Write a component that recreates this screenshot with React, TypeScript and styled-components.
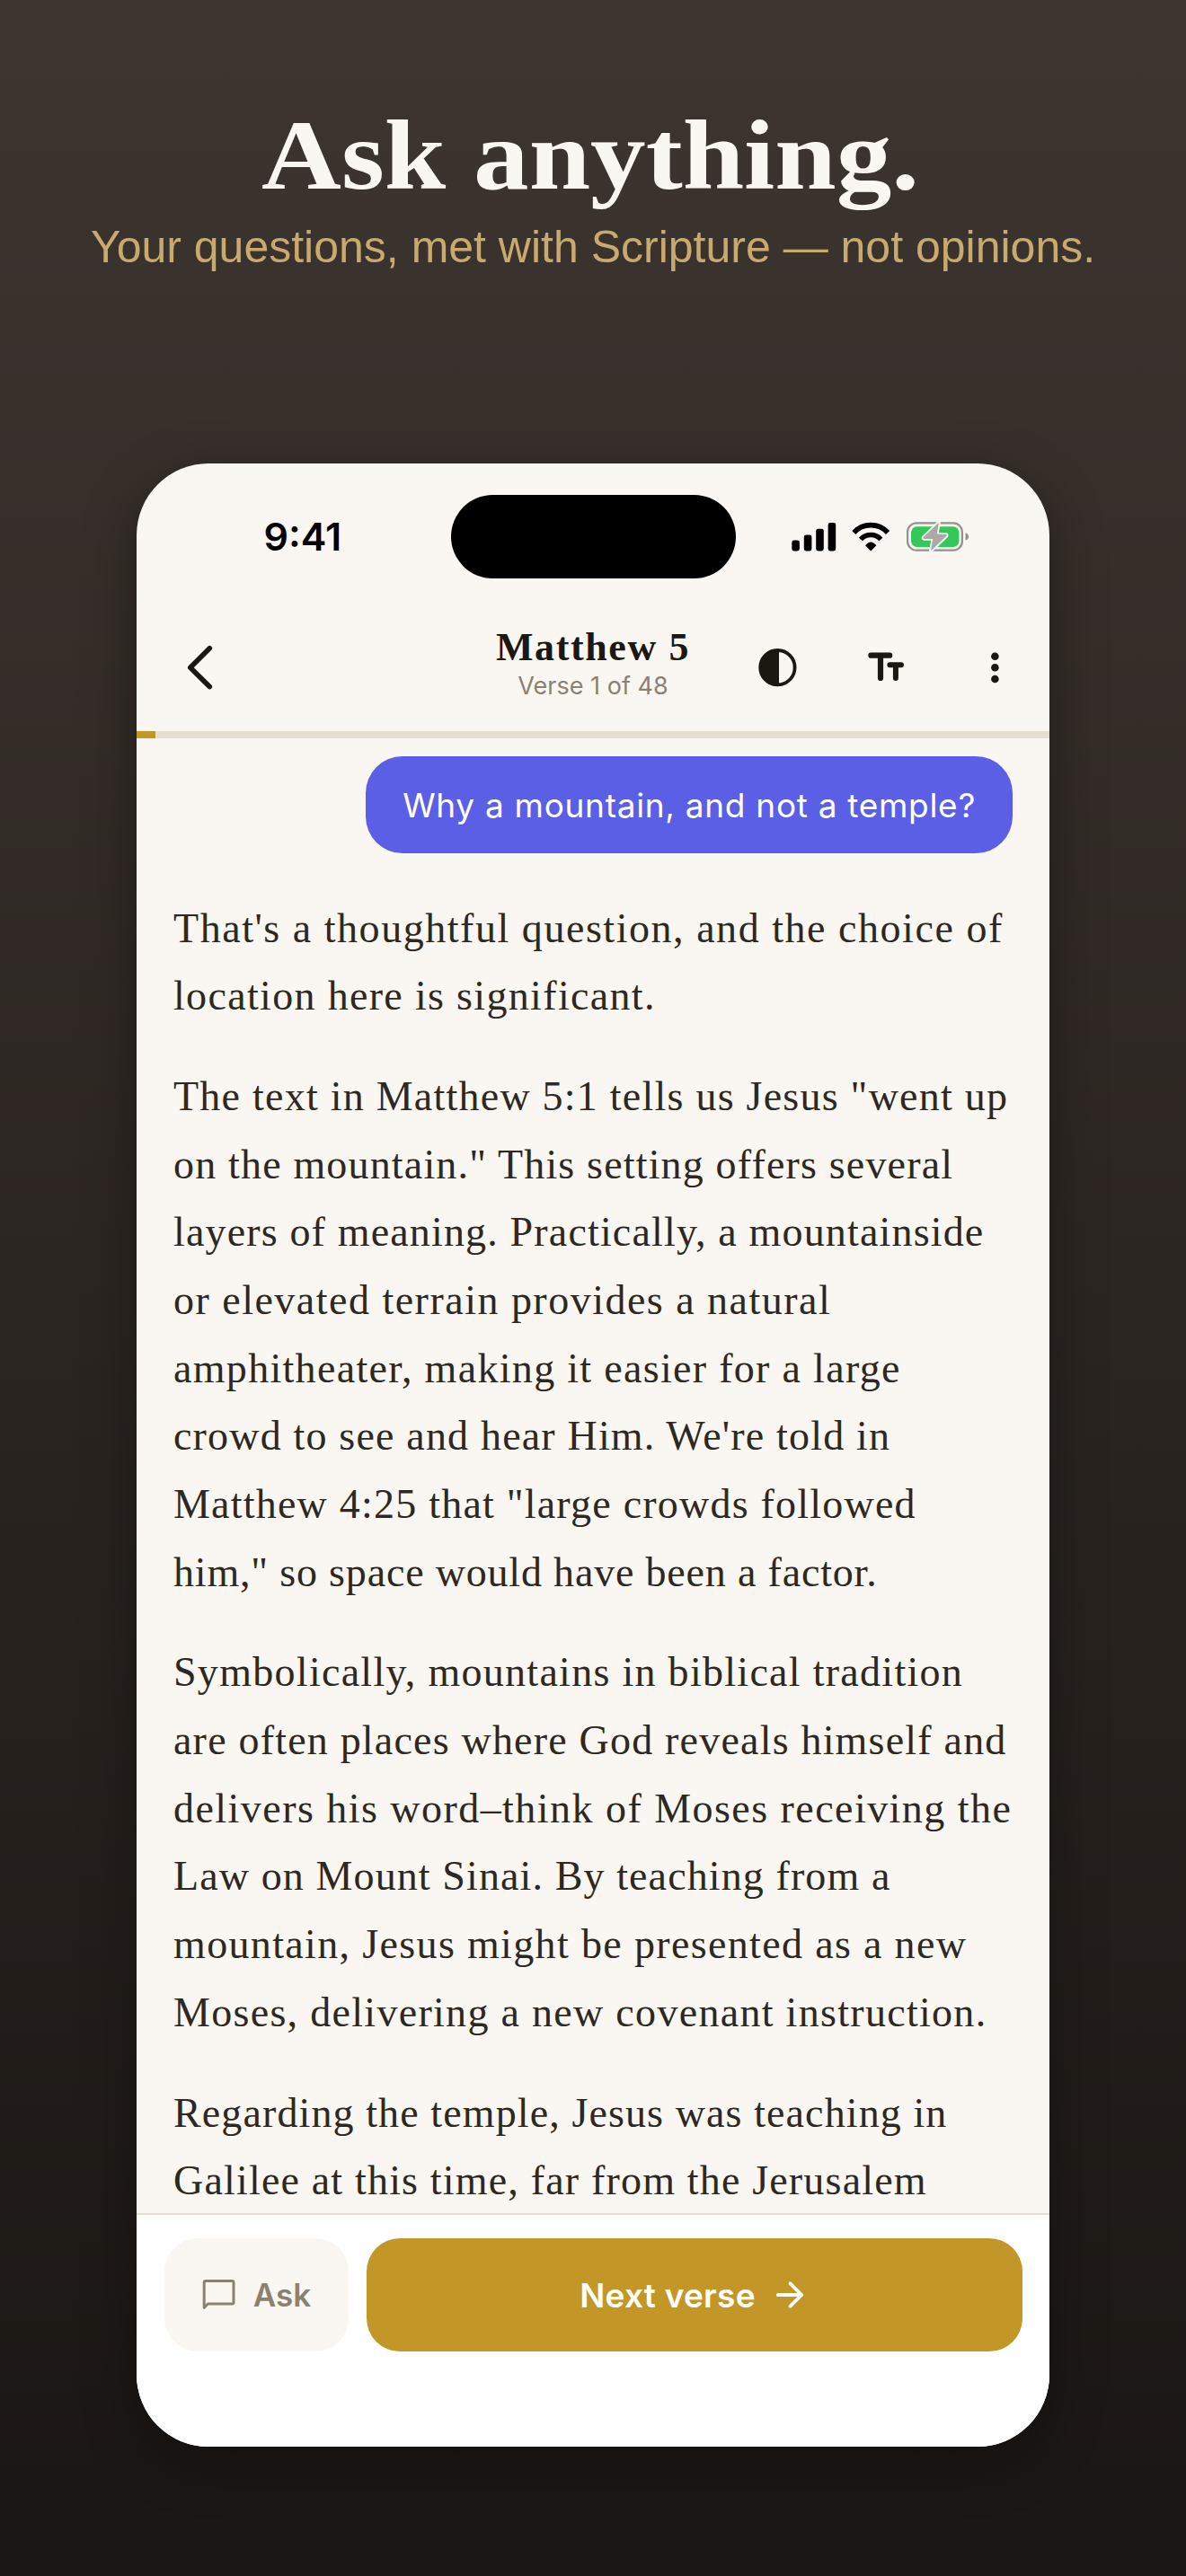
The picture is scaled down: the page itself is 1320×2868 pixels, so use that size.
import React from "react";
import styled, { ThemeProvider, createGlobalStyle } from "styled-components";

const theme = {
  colors: {
    cream: "#faf7f2",
    sand: "#e6dfd1",
    gold: "#c39628",
    tan: "#c9a96e",
    indigo: "#5b5fe6",
    ink: "#1b1711",
    body: "#2d2822",
    muted: "#8b8173",
    white: "#ffffff",
  },
  fontFamily: {
    serif: `"Liberation Serif", "Times New Roman", serif`,
    sans: `Inter, "Liberation Sans", sans-serif`,
    arial: `"Liberation Sans", Arial, sans-serif`,
  },
};

const GlobalStyle = createGlobalStyle`
  body {
    margin: 0;
  }

  *, *::before, *::after {
    box-sizing: border-box;
  }
`;

const Page = styled.main`
  width: 1320px;
  height: 2868px;
  padding-top: 113px;
  display: flex;
  flex-direction: column;
  align-items: center;
  overflow: hidden;
  background: linear-gradient(180deg, #3d3530 0%, #1a1613 100%);
`;

const Headline = styled.h1`
  margin: 0;
  font-family: ${(props) => props.theme.fontFamily.serif};
  font-weight: 700;
  font-size: 110px;
  line-height: 120px;
  color: ${(props) => props.theme.colors.cream};
  white-space: nowrap;
  transform: translateX(-3px) scaleX(1.119);
`;

const Tagline = styled.p`
  margin: 12px 0 0;
  font-family: ${(props) => props.theme.fontFamily.arial};
  font-size: 50px;
  line-height: 60px;
  color: ${(props) => props.theme.colors.tan};
  white-space: nowrap;
`;

const Phone = styled.section`
  width: 1016px;
  height: 2208px;
  margin-top: 211px;
  flex-shrink: 0;
  display: flex;
  flex-direction: column;
  overflow: hidden;
  border-radius: 80px;
  background-color: ${(props) => props.theme.colors.cream};
  box-shadow: 0 16px 60px rgba(0, 0, 0, 0.35);
`;

const StatusBar = styled.div`
  height: 156px;
  padding-top: 35px;
  flex-shrink: 0;
  display: grid;
  grid-template-columns: 1fr 317px 1fr;
  grid-template-rows: 93px;
  align-items: center;
`;

const Clock = styled.div`
  padding-left: 141.5px;
  font-family: ${(props) => props.theme.fontFamily.sans};
  font-weight: 600;
  font-size: 43px;
  line-height: 93px;
  color: #000;
`;

const Island = styled.div`
  height: 93px;
  border-radius: 47px;
  background-color: #000;
`;

const StatusIcons = styled.div`
  padding-left: 62px;
  display: flex;
  align-items: center;
  gap: 18px;

  svg {
    display: block;
    overflow: visible;
  }
`;

const Header = styled.header`
  height: 142px;
  padding: 0 37px;
  flex-shrink: 0;
  display: grid;
  grid-template-columns: 1fr auto 1fr;
  align-items: center;
`;

const IconButton = styled.button`
  width: 48px;
  height: 48px;
  padding: 0;
  border: 0;
  background: none;
  color: ${(props) => props.theme.colors.ink};

  svg {
    display: block;
  }
`;

const BackButton = styled(IconButton)`
  margin-left: 9px;
`;

const Actions = styled.div`
  display: flex;
  justify-content: flex-end;
  gap: 73px;
`;

const TitleBlock = styled.div`
  padding-bottom: 9px;
  text-align: center;
  white-space: nowrap;
`;

const Title = styled.h2`
  margin: 0 0 2px;
  font-family: ${(props) => props.theme.fontFamily.serif};
  font-weight: 700;
  font-size: 44px;
  line-height: 48px;
  letter-spacing: 1.6px;
  color: ${(props) => props.theme.colors.ink};
`;

const Subtitle = styled.div`
  font-family: ${(props) => props.theme.fontFamily.sans};
  font-size: 27px;
  line-height: 34px;
  color: ${(props) => props.theme.colors.muted};
`;

const ProgressTrack = styled.div`
  height: 8px;
  flex-shrink: 0;
  background-color: ${(props) => props.theme.colors.sand};
`;

const ProgressFill = styled.div`
  height: 100%;
  background-color: ${(props) => props.theme.colors.gold};
`;

const Conversation = styled.div`
  flex: 1;
  min-height: 0;
  padding: 20px 41px 0;
  display: flex;
  flex-direction: column;
  overflow: hidden;
`;

const Question = styled.div`
  height: 108px;
  padding: 0 41px;
  align-self: flex-end;
  flex-shrink: 0;
  border-radius: 41px;
  background-color: ${(props) => props.theme.colors.indigo};
  font-family: ${(props) => props.theme.fontFamily.sans};
  font-size: 37px;
  line-height: 109px;
  letter-spacing: 0.7px;
  color: ${(props) => props.theme.colors.white};
  white-space: nowrap;
`;

const Answer = styled.div`
  margin-top: 45.5px;
  display: flex;
  flex-direction: column;
  gap: 36px;
  font-family: ${(props) => props.theme.fontFamily.serif};
  font-size: 46px;
  line-height: 75.68px;
  color: ${(props) => props.theme.colors.body};
`;

const Paragraph = styled.p`
  margin: 0;
`;

const Line = styled.span<{ $spacing: number }>`
  display: block;
  letter-spacing: ${(props) => props.$spacing}px;
  white-space: nowrap;
  font-variant-ligatures: none;
`;

const Footer = styled.footer`
  height: 260px;
  padding: 26px 30px 0 31px;
  flex-shrink: 0;
  display: flex;
  align-items: flex-start;
  gap: 20px;
  border-top: 2px solid ${(props) => props.theme.colors.sand};
  background-color: ${(props) => props.theme.colors.white};
`;

const FooterButton = styled.button`
  height: 126px;
  padding: 0;
  border: 0;
  border-radius: 37px;
  display: flex;
  align-items: center;
  justify-content: center;
  gap: 20px;
  font-family: ${(props) => props.theme.fontFamily.sans};
  font-weight: 600;
`;

const AskButton = styled(FooterButton)`
  width: 205px;
  background-color: ${(props) => props.theme.colors.cream};
  color: ${(props) => props.theme.colors.muted};
  font-size: 35px;
`;

const NextButton = styled(FooterButton)`
  flex: 1;
  padding-right: 4px;
  background-color: ${(props) => props.theme.colors.gold};
  color: ${(props) => props.theme.colors.white};
  font-size: 37px;
  letter-spacing: 0.25px;
`;

const SignalIcon = () => (
  <svg width="49.5" height="33" viewBox="0 0 49.5 33" fill="#000">
    <rect x="0.3" y="20.5" width="8.6" height="12" rx="2.4" />
    <rect x="13.8" y="14.5" width="8.6" height="18" rx="2.4" />
    <rect x="27.2" y="7.7" width="8.6" height="24.8" rx="2.4" />
    <rect x="40.6" y="1" width="8.6" height="31.5" rx="2.4" />
  </svg>
);

const WifiIcon = () => (
  <svg width="43.4" height="33" viewBox="0 0 43.4 33" fill="none" stroke="#000">
    <path d="M2.3 12A25.6 25.6 0 0 1 40.1 12" strokeWidth="5.6" />
    <path d="M10 19.5A15 15 0 0 1 32.4 19.5" strokeWidth="5.6" />
    <path d="M21.2 32.5L15 26.2Q21.2 18.6 27.4 26.2Z" fill="#000" stroke="none" />
  </svg>
);

const BatteryIcon = () => (
  <svg width="70" height="33" viewBox="0 0 70 33" fill="none">
    <rect x="1.1" y="1.3" width="60.8" height="30.4" rx="10" stroke="#94928e" strokeWidth="2.2" />
    <path d="M65.5 12.2Q69.2 13.6 69.2 16.4T65.5 20.6Z" fill="#94928e" />
    <rect x="5" y="5.2" width="53.4" height="22.7" rx="6.6" fill="#34c759" />
    <path
      d="M36 .6L18.6 17.2Q18 18.8 19.6 18.9L29.3 19L26.9 32.6L44.6 15.6Q45.2 14 43.6 13.8L33.8 13.6Z"
      fill="#aaa9a6"
      stroke="#faf7f2"
      strokeWidth="3.6"
      strokeLinejoin="round"
      paintOrder="stroke"
    />
  </svg>
);

const BackIcon = () => (
  <svg width="48" height="48" viewBox="0 0 48 48" fill="none" stroke="currentColor" overflow="visible">
    <path d="M35.3 2.7L13.8 24.3L35.3 45.6" strokeWidth="5.6" strokeLinecap="round" strokeLinejoin="round" />
  </svg>
);

const ContrastIcon = () => (
  <svg width="48" height="48" viewBox="0 0 48 48">
    <circle cx="24.4" cy="24.2" r="19.2" fill="none" stroke="currentColor" strokeWidth="3.8" />
    <path d="M26 4V44.4H24.4A20.2 20.2 0 0 1 24.4 4Z" fill="currentColor" />
  </svg>
);

const TextSizeIcon = () => (
  <svg width="48" height="48" viewBox="0 0 48 48" fill="none" stroke="currentColor" strokeWidth="6.2" strokeLinecap="round">
    <path d="M7.4 10.7H28.2M18 10.7V36" />
    <path d="M28.4 21.3H41M34.9 21.3V36" strokeWidth="6" />
  </svg>
);

const MoreIcon = () => (
  <svg width="48" height="48" viewBox="0 0 48 48" fill="currentColor">
    <circle cx="24.4" cy="11.7" r="4.3" />
    <circle cx="24.4" cy="24.3" r="4.3" />
    <circle cx="24.4" cy="37" r="4.3" />
  </svg>
);

const ChatIcon = () => (
  <svg width="37" height="36" viewBox="0 0 37 36" fill="none" stroke="currentColor" strokeWidth="3" strokeLinejoin="round">
    <path d="M4 2.5H33.2Q35 2.5 35 4.3V26.2Q35 28 33.2 28H6.4L2.2 32.3V4.3Q2.2 2.5 4 2.5Z" />
  </svg>
);

const ArrowIcon = () => (
  <svg width="36" height="36" viewBox="0 0 36 36" fill="none" stroke="currentColor" strokeWidth="3.8" strokeLinecap="round" strokeLinejoin="round">
    <path d="M4.8 18H31.2M18.6 5.3L31.2 18L18.6 30.7" />
  </svg>
);

// [text, letter spacing in px]
const ANSWER: [string, number][][] = [
  [
    ["That's a thoughtful question, and the choice of", 1.54],
    ["location here is significant.", 1.33],
  ],
  [
    ['The text in Matthew 5:1 tells us Jesus "went up', 1.24],
    ['on the mountain." This setting offers several', 1.17],
    ["layers of meaning. Practically, a mountainside", 1.16],
    ["or elevated terrain provides a natural", 1.49],
    ["amphitheater, making it easier for a large", 1.31],
    ["crowd to see and hear Him. We're told in", 1.18],
    ['Matthew 4:25 that "large crowds followed', 1.22],
    ['him," so space would have been a factor.', 0.82],
  ],
  [
    ["Symbolically, mountains in biblical tradition", 1.29],
    ["are often places where God reveals himself and", 1.2],
    ["delivers his word–think of Moses receiving the", 1.46],
    ["Law on Mount Sinai. By teaching from a", 1.11],
    ["mountain, Jesus might be presented as a new", 1.35],
    ["Moses, delivering a new covenant instruction.", 1.3],
  ],
  [
    ["Regarding the temple, Jesus was teaching in", 1.11],
    ["Galilee at this time, far from the Jerusalem", 1.18],
  ],
];

const VERSE = 1;
const TOTAL_VERSES = 48;

export default function App() {
  const renderAnswer = () => {
    return ANSWER.map((lines, index) => (
      <Paragraph key={index}>
        {lines.map(([text, spacing]) => (
          <Line key={text} $spacing={spacing}>
            {text}
          </Line>
        ))}
      </Paragraph>
    ));
  };

  return (
    <ThemeProvider theme={theme}>
      <GlobalStyle />
      <Page>
        <Headline>Ask anything.</Headline>
        <Tagline>Your questions, met with Scripture — not opinions.</Tagline>
        <Phone>
          <StatusBar>
            <Clock>9:41</Clock>
            <Island />
            <StatusIcons>
              <SignalIcon />
              <WifiIcon />
              <BatteryIcon />
            </StatusIcons>
          </StatusBar>
          <Header>
            <BackButton aria-label="Back">
              <BackIcon />
            </BackButton>
            <TitleBlock>
              <Title>Matthew 5</Title>
              <Subtitle>
                Verse {VERSE} of {TOTAL_VERSES}
              </Subtitle>
            </TitleBlock>
            <Actions>
              <IconButton aria-label="Theme">
                <ContrastIcon />
              </IconButton>
              <IconButton aria-label="Text size">
                <TextSizeIcon />
              </IconButton>
              <IconButton aria-label="More">
                <MoreIcon />
              </IconButton>
            </Actions>
          </Header>
          <ProgressTrack>
            <ProgressFill style={{ width: `${(VERSE / TOTAL_VERSES) * 100}%` }} />
          </ProgressTrack>
          <Conversation>
            <Question>Why a mountain, and not a temple?</Question>
            <Answer>{renderAnswer()}</Answer>
          </Conversation>
          <Footer>
            <AskButton>
              <ChatIcon />
              Ask
            </AskButton>
            <NextButton>
              Next verse
              <ArrowIcon />
            </NextButton>
          </Footer>
        </Phone>
      </Page>
    </ThemeProvider>
  );
}
